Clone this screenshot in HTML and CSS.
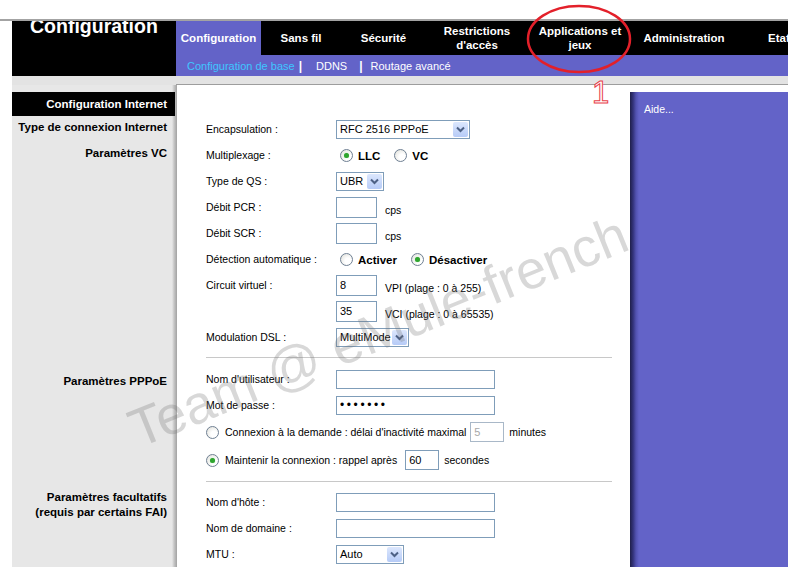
FILE: index.html
```html
<!DOCTYPE html>
<html lang="fr">
<head>
    <meta charset="UTF-8">
    <meta name="viewport" content="width=device-width, initial-scale=1.0">
    <title>Configuration</title>
    <link rel="stylesheet" href="styles.css">
</head>
<body>

    <div class="topline"></div>

    <div class="header">
        <div class="brand"><h1>Configuration</h1></div>
        <div class="nav">
            <div class="tabs">
                <div class="tab tab-config active">Configuration</div>
                <div class="tab tab-wireless">Sans fil</div>
                <div class="tab tab-security">Sécurité</div>
                <div class="tab tab-access">Restrictions<br>d'accès</div>
                <div class="tab tab-apps">Applications et<br>jeux</div>
                <div class="tab tab-admin">Administration</div>
                <div class="tab tab-status">Etat</div>
            </div>
            <div class="subnav">
                <span class="sub current">Configuration de base</span>
                <span class="sep">|</span>
                <span class="sub">DDNS</span>
                <span class="sep sep-2">|</span>
                <span class="sub">Routage avancé</span>
            </div>
        </div>
    </div>

    <div class="band">
        <div class="band-left"></div>
        <div class="band-right"></div>
    </div>

    <div class="main">
        <div class="help">Aide...</div>

        <!-- en-tête de colonne -->
        <div class="side side-head"><div class="side-title">Configuration Internet</div></div>
        <div class="section"></div>

        <!-- type de connexion -->
        <div class="side"><div class="side-label">Type de connexion Internet</div></div>
        <div class="section">
            <div class="row">
                <label class="label">Encapsulation :</label>
                <div class="select select-encap"><span>RFC 2516 PPPoE</span><span class="drop"><svg width="9" height="7" viewBox="0 0 9 7"><path d="M1 1.5 L4.5 5 L8 1.5" fill="none" stroke="#4d6185" stroke-width="2"/></svg></span></div>
            </div>
        </div>

        <!-- paramètres VC -->
        <div class="side"><div class="side-label">Paramètres VC</div></div>
        <div class="section">
            <div class="row">
                <label class="label">Multiplexage :</label>
                <div class="choices">
                    <span class="choice"><span class="radio checked"></span><b>LLC</b></span>
                    <span class="choice"><span class="radio"></span><b>VC</b></span>
                </div>
            </div>
            <div class="row">
                <label class="label">Type de QS :</label>
                <div class="select select-qos"><span>UBR</span><span class="drop"><svg width="9" height="7" viewBox="0 0 9 7"><path d="M1 1.5 L4.5 5 L8 1.5" fill="none" stroke="#4d6185" stroke-width="2"/></svg></span></div>
            </div>
            <div class="row">
                <label class="label">Débit PCR :</label>
                <input class="field field-small" type="text" value="">
                <span class="unit unit-low">cps</span>
            </div>
            <div class="row">
                <label class="label">Débit SCR :</label>
                <input class="field field-small" type="text" value="">
                <span class="unit unit-low">cps</span>
            </div>
            <div class="row">
                <label class="label">Détection automatique :</label>
                <div class="choices">
                    <span class="choice"><span class="radio"></span><b>Activer</b></span>
                    <span class="choice"><span class="radio checked"></span><b>Désactiver</b></span>
                </div>
            </div>
            <div class="row">
                <label class="label">Circuit virtuel :</label>
                <input class="field field-small" type="text" value="8">
                <span class="unit unit-low">VPI (plage : 0 à 255)</span>
            </div>
            <div class="row">
                <span class="label"></span>
                <input class="field field-small" type="text" value="35">
                <span class="unit unit-low">VCI (plage : 0 à 65535)</span>
            </div>
            <div class="row">
                <label class="label">Modulation DSL :</label>
                <div class="select select-dsl"><span>MultiMode</span><span class="drop"><svg width="9" height="7" viewBox="0 0 9 7"><path d="M1 1.5 L4.5 5 L8 1.5" fill="none" stroke="#4d6185" stroke-width="2"/></svg></span></div>
            </div>
            <div class="divider"></div>
        </div>

        <!-- paramètres PPPoE -->
        <div class="side"><div class="side-label side-label-pppoe">Paramètres PPPoE</div></div>
        <div class="section">
            <div class="row">
                <label class="label">Nom d'utilisateur :</label>
                <input class="field field-wide" type="text" value="">
            </div>
            <div class="row">
                <label class="label">Mot de passe :</label>
                <input class="field field-wide field-pass" type="password" value="1234567">
            </div>
            <div class="row row-tall">
                <span class="radio"></span>
                <span class="option-text">Connexion à la demande : délai d'inactivité maximal</span>
                <input class="field field-tiny field-off" type="text" value="5">
                <span class="unit">minutes</span>
            </div>
            <div class="row row-tall">
                <span class="radio checked"></span>
                <span class="option-text">Maintenir la connexion : rappel après</span>
                <input class="field field-tiny field-keep" type="text" value="60">
                <span class="unit">secondes</span>
            </div>
            <div class="divider divider-2"></div>
        </div>

        <!-- paramètres facultatifs -->
        <div class="side"><div class="side-label side-label-extra">Paramètres facultatifs<br>(requis par certains FAI)</div></div>
        <div class="section section-last">
            <div class="row">
                <label class="label">Nom d'hôte :</label>
                <input class="field field-wide" type="text" value="">
            </div>
            <div class="row">
                <label class="label">Nom de domaine :</label>
                <input class="field field-wide" type="text" value="">
            </div>
            <div class="row">
                <label class="label">MTU :</label>
                <div class="select select-mtu"><span>Auto</span><span class="drop"><svg width="9" height="7" viewBox="0 0 9 7"><path d="M1 1.5 L4.5 5 L8 1.5" fill="none" stroke="#4d6185" stroke-width="2"/></svg></span></div>
            </div>
        </div>
    </div>

    <div class="watermark">Team @ eMule-french</div>

    <svg class="circle" width="110" height="74" viewBox="0 0 110 74">
        <ellipse cx="54" cy="37" rx="51" ry="33" fill="none" stroke="#e3202a" stroke-width="2.5"/>
    </svg>
    <div class="marker">1</div>

</body>
</html>
```

FILE: styles.css
```css
body {
    margin: 0;
    font-family: "Liberation Sans", Arial, sans-serif;
    font-size: 10.5px;
    color: #000;
    background: #fff;
    position: relative;
    height: 567px;
    overflow: hidden;
}
.topline {
    height: 19px;
    border-bottom: 2px solid #a3a3a3;
}

/* en-tête noir */
.header {
    display: flex;
    height: 55px;
    margin-left: 12px;
    background: #000;
}
.brand {
    width: 164px;
    overflow: hidden;
}
.brand h1 {
    margin: -5px 0 0 18px;
    font-size: 19.5px;
    line-height: 20px;
    color: #fff;
}
.nav {
    flex: 1;
    overflow: hidden;
}
.tabs {
    display: flex;
    height: 34px;
}
.tab {
    flex-shrink: 0;
    display: flex;
    align-items: center;
    justify-content: center;
    text-align: center;
    white-space: nowrap;
    color: #fff;
    font-weight: bold;
    font-size: 11.5px;
    line-height: 14px;
}
.tab.active {
    background: #6363c8;
}
.tab-config { width: 85px; }
.tab-wireless { width: 80px; }
.tab-security { width: 85px; }
.tab-access { width: 102px; }
.tab-apps { width: 104px; }
.tab-admin { width: 104px; }
.tab-status {
    width: 86px;
    justify-content: flex-start;
    padding-left: 32px;
    box-sizing: border-box;
}
.subnav {
    display: flex;
    align-items: center;
    height: 21px;
    padding-left: 11px;
    background: #6363c8;
    color: #fff;
    font-size: 11px;
}
.sub.current {
    color: #3fc6ff;
}
.sep {
    font-weight: bold;
    font-size: 12px;
    margin: 0 14px 0 4px;
}
.sep-2 {
    margin: 0 8px 0 12px;
}

.band {
    display: flex;
    height: 9px;
    margin-left: 12px;
}
.band-left {
    width: 164px;
    background: #e3e3e3;
}
.band-right {
    flex: 1;
    height: 8px;
    background: #e3e3e3;
    border-bottom: 1px solid #9d9d9d;
}

/* corps */
.main {
    display: grid;
    grid-template-columns: 165px 453px 158px;
    margin-left: 12px;
}
.help {
    grid-column: 3;
    grid-row: 1 / span 5;
    margin-top: 7px;
    padding: 10px 0 0 14px;
    background: linear-gradient(to right, #20204a 0, #33337a 3px, #5252b0 6px, #6363c8 9px);
    color: #fff;
    line-height: 14px;
}
.side {
    background: linear-gradient(to right, #e7e7e7 160px, #c6c6c6 162px, #a2a2a2 165px);
    text-align: right;
    padding-right: 10px;
    font-weight: bold;
    font-size: 11.5px;
    line-height: 14px;
}
.side-head {
    padding-top: 7px;
}
.side-title {
    height: 24px;
    line-height: 24px;
    margin-right: -8px;
    padding-right: 8px;
    background: #000;
    color: #fff;
}
.side-label {
    padding-top: 4px;
}
.side-label-pppoe {
    padding-top: 8px;
}
.side-label-extra {
    padding-top: 1px;
    line-height: 15px;
}

.section {
    padding-left: 29px;
}
.section-last {
    padding-bottom: 20px;
}
.row {
    display: flex;
    align-items: center;
    height: 26px;
}
.row-tall {
    height: 28px;
}
.label {
    width: 130px;
    flex-shrink: 0;
}
.field {
    display: block;
    box-sizing: border-box;
    height: 19px;
    margin: 0;
    padding: 0 3px;
    border: 1px solid #7f9db9;
    background: #fff;
    font-family: "Liberation Sans", Arial, sans-serif;
    font-size: 11px;
    color: #000;
    outline: none;
}
.field-small {
    width: 41px;
    height: 21px;
}
.field-wide {
    width: 159px;
}
.field-tiny {
    width: 34px;
    height: 20px;
    margin-left: 4px;
}
.field-keep {
    margin-left: 8px;
}
.field-off {
    color: #a8a8a8;
    border-color: #a9b8c8;
}
.field-pass {
    font-size: 12px;
    letter-spacing: 2.6px;
}
.unit {
    margin-left: 5px;
}
.unit-low {
    margin-left: 8px;
    margin-top: 6px;
}

.select {
    display: flex;
    align-items: center;
    justify-content: space-between;
    box-sizing: border-box;
    height: 19px;
    padding-left: 3px;
    border: 1px solid #7f9db9;
    background: #fff;
    font-size: 11px;
}
.select-encap { width: 134px; }
.select-qos { width: 48px; }
.select-dsl { width: 73px; }
.select-mtu { width: 68px; }
.drop {
    display: flex;
    align-items: center;
    justify-content: center;
    width: 15px;
    height: 15px;
    margin-right: 1px;
    border-radius: 2px;
    background: linear-gradient(#dce7fd, #b6cbf7);
}

.choices {
    display: flex;
    align-items: center;
    padding-left: 4px;
}
.choice {
    display: flex;
    align-items: center;
    margin-right: 14px;
    font-size: 11.5px;
}
.choice b {
    margin-left: 5px;
    margin-top: 2px;
}
.radio {
    display: inline-flex;
    flex-shrink: 0;
    width: 13px;
    height: 13px;
    box-sizing: border-box;
    border: 1px solid #6f8093;
    border-radius: 50%;
    background: radial-gradient(circle at 65% 65%, #ffffff 30%, #dcdcd5 100%);
}
.radio.checked::after {
    content: "";
    width: 5px;
    height: 5px;
    margin: auto;
    border-radius: 50%;
    background: #2fa52f;
    box-shadow: 0 0 1px #7fd07f;
}
.option-text {
    margin-left: 6px;
}

.divider {
    width: 406px;
    margin: 7px 0 8px;
    border-top: 1px solid #c8c8c8;
}
.divider-2 {
    margin-bottom: 7px;
}

/* surimpressions de la capture */
.watermark {
    position: absolute;
    left: 112px;
    top: 301px;
    font-size: 54px;
    line-height: 60px;
    white-space: nowrap;
    color: rgba(110, 110, 110, 0.27);
    transform: rotate(-22deg);
}
.circle {
    position: absolute;
    left: 525px;
    top: 2px;
}
.marker {
    position: absolute;
    left: 592px;
    top: 77px;
    font-size: 31px;
    line-height: 31px;
    color: #fff;
    -webkit-text-stroke: 1px #e8404a;
}
```
